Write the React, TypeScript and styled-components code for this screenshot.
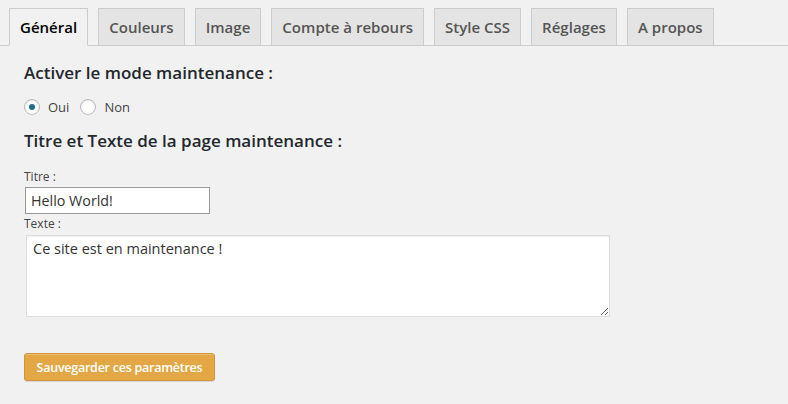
import React from "react";
import styled, { createGlobalStyle, css } from "styled-components";

const Global = createGlobalStyle`
  html, body { margin: 0; padding: 0; background: #f1f1f1; }
  body { font-family: "Open Sans", "Noto Sans", sans-serif; color: #444; }
`;

const Page = styled.div`
  width: 788px;
  height: 404px;
  background: #f1f1f1;
  overflow: hidden;
`;

const TabBar = styled.nav`
  display: flex;
  gap: 10px;
  padding: 8px 0 0 9px;
  border-bottom: 1px solid #ccc;
`;

const Tab = styled.a<{ $active?: boolean }>`
  display: block;
  box-sizing: border-box;
  height: 38px;
  margin-bottom: -1px;
  padding: 6px 10px;
  border: 1px solid #ccc;
  font-size: 15px;
  line-height: 24px;
  font-weight: 600;
  letter-spacing: 0.02px;
  text-decoration: none;
  white-space: nowrap;
  ${(p) =>
    p.$active
      ? css`
          background: #f1f1f1;
          color: #000;
          border-bottom-color: #f1f1f1;
        `
      : css`
          background: #e4e4e4;
          color: #555;
        `}
`;

const Content = styled.div`
  padding-left: 24px;
  display: flex;
  flex-direction: column;
  align-items: flex-start;
`;

const Heading = styled.h3<{ $top: number }>`
  margin: ${(p) => p.$top}px 0 0;
  font-size: 17px;
  line-height: 20px;
  font-weight: 600;
  color: #23282d;
`;

const RadioRow = styled.div`
  display: flex;
  align-items: center;
  height: 20px;
  margin-top: 14px;
`;

const RadioLabel = styled.label`
  display: flex;
  align-items: center;
  gap: 8px;
  margin-right: 11px;
  font-size: 13px;
  color: #444;
`;

const Radio = styled.span<{ $checked?: boolean }>`
  box-sizing: border-box;
  width: 16px;
  height: 16px;
  border-radius: 50%;
  border: 1px solid #b4b9be;
  background: #fff;
  box-shadow: inset 0 1px 2px rgba(0, 0, 0, 0.1);
  display: flex;
  align-items: center;
  justify-content: center;
  &::after {
    content: "";
    width: 6px;
    height: 6px;
    border-radius: 50%;
    background: ${(p) => (p.$checked ? "#1e6d8e" : "transparent")};
  }
`;

const FieldLabel = styled.label<{ $top: number }>`
  display: block;
  margin-top: ${(p) => p.$top}px;
  font-size: 12px;
  line-height: 16px;
  color: #444;
`;

const TextInput = styled.input`
  box-sizing: border-box;
  margin: 2px 0 0 1px;
  width: 185px;
  height: 27px;
  padding: 2px 5px;
  border: 1px solid #999;
  background: #fff;
  font-family: "Open Sans", sans-serif;
  font-size: 14.3px;
  color: #333;
  outline: none;
`;

const TextArea = styled.textarea`
  box-sizing: border-box;
  margin: 3px 0 0 2px;
  width: 584px;
  height: 82px;
  padding: 3px 6px;
  border: 1px solid #ddd;
  background: #fff;
  font-family: "Open Sans", sans-serif;
  font-size: 14.5px;
  line-height: 20px;
  color: #333;
  outline: none;
  box-shadow: inset 0 1px 2px rgba(0, 0, 0, 0.07);
`;

const SaveButton = styled.button`
  box-sizing: border-box;
  margin-top: 36px;
  width: 191px;
  height: 28px;
  padding: 0 6px;
  border: 1px solid #d1953a;
  border-radius: 3px;
  background: #e3a845;
  color: #fff;
  font-family: "Open Sans", sans-serif;
  font-size: 12.5px;
  font-weight: 600;
  letter-spacing: -0.25px;
  white-space: nowrap;
  box-shadow: inset 0 1px 0 rgba(255, 255, 255, 0.25), 0 1px 0 rgba(0, 0, 0, 0.1);
  cursor: pointer;
`;

const tabs = ["Général", "Couleurs", "Image", "Compte à rebours", "Style CSS", "Réglages", "A propos"];

export default function App() {
  return (
    <Page>
      <Global />
      <TabBar>
        {tabs.map((t, i) => (
          <Tab key={t} $active={i === 0} href="#">
            {t}
          </Tab>
        ))}
      </TabBar>
      <Content>
        <Heading $top={17}>Activer le mode maintenance :</Heading>
        <RadioRow>
          <RadioLabel>
            <Radio $checked />
            Oui
          </RadioLabel>
          <RadioLabel>
            <Radio />
            Non
          </RadioLabel>
        </RadioRow>
        <Heading $top={14}>Titre et Texte de la page maintenance :</Heading>
        <FieldLabel $top={18}>Titre :</FieldLabel>
        <TextInput defaultValue="Hello World!" />
        <FieldLabel $top={2}>Texte :</FieldLabel>
        <TextArea defaultValue="Ce site est en maintenance !" />
        <SaveButton>Sauvegarder ces paramètres</SaveButton>
      </Content>
    </Page>
  );
}
